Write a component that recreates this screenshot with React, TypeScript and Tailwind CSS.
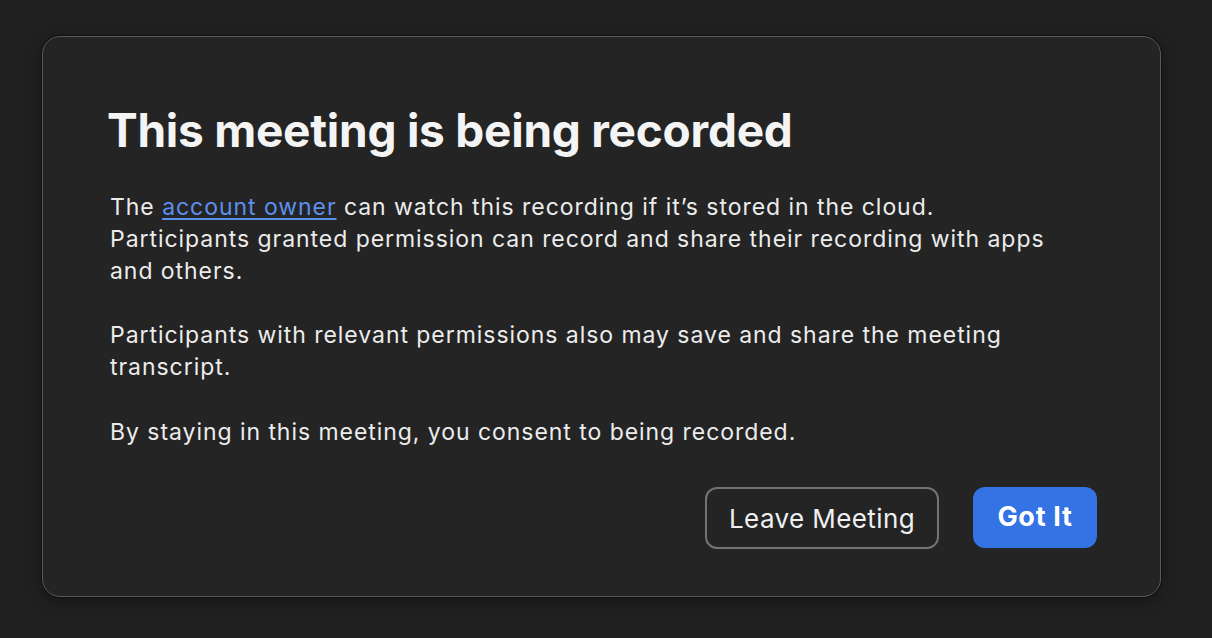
import React from 'react';

/**
 * Recording consent dialog
 */
export default function App() {
  return (
    <div
      className="min-h-[638px] w-full bg-[#202020] pl-[42px] pt-[36px]"
      style={{ fontFamily: 'Inter, "Noto Sans", sans-serif' }}
    >
      <div className="flex h-[561px] w-[1119px] flex-col rounded-[18px] border border-[#5a5a5a] bg-[#242424] pl-[64px] pr-[63px] pt-[66px] shadow-[0_0_0_1px_#111,0_4px_16px_rgba(0,0,0,0.35)]">
        <h1 className="text-[46px] font-bold leading-[54px] tracking-[-0.25px] text-[#f4f4f4]">
          This meeting is being recorded
        </h1>

        <div className="mt-[34px] pl-[3px] text-[23px] leading-[32px] tracking-[0.95px] text-[#ececec]">
          <p>
            The{' '}
            <a href="#" className="text-[#5d8fec] underline underline-offset-[3px]">
              account owner
            </a>{' '}
            can watch this recording if it’s stored in the cloud.
            <br />
            Participants granted permission can record and share their recording with apps
            <br />
            and others.
          </p>
          <p className="mt-[32px]">
            Participants with relevant permissions also may save and share the meeting
            <br />
            transcript.
          </p>
          <p className="mt-[33px]">By staying in this meeting, you consent to being recorded.</p>
        </div>

        <div className="mt-[39px] flex justify-end gap-[34px]">
          <button className="h-[62px] w-[234px] rounded-[12px] border-2 border-[#737373] text-[26px] tracking-[0.4px] text-[#f0f0f0]">
            Leave Meeting
          </button>
          <button className="h-[61px] w-[124px] rounded-[12px] bg-[#3373e3] text-[27px] font-bold tracking-[0.7px] text-white">
            Got It
          </button>
        </div>
      </div>
    </div>
  );
}
